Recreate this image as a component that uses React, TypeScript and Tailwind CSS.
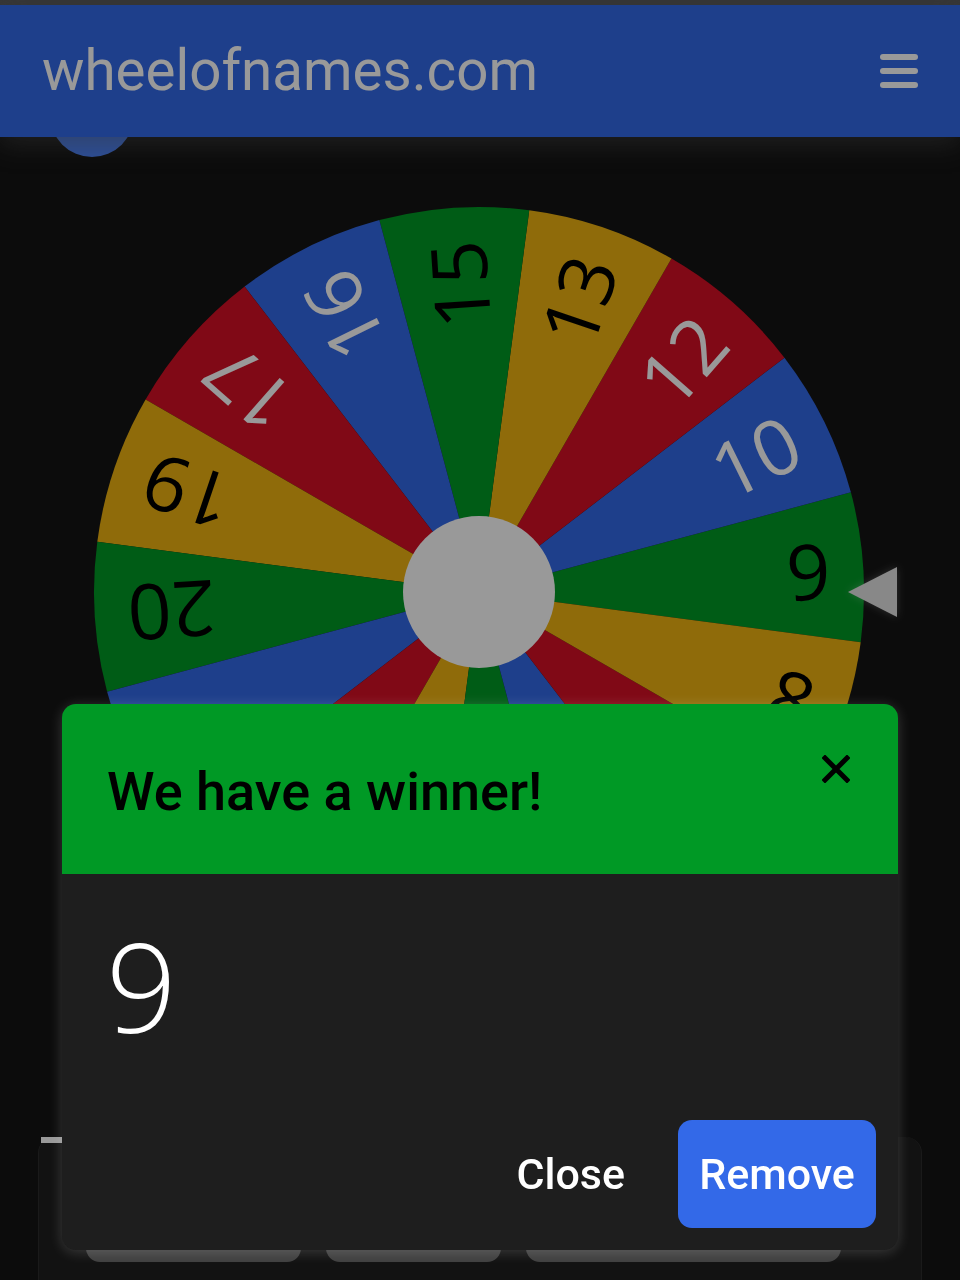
import { useState } from "react";

const colors = ["#009925", "#3369e8", "#d50f25", "#eeb211"];
const labels = ["9", "10", "12", "13", "15", "16", "17", "19", "20", "1", "2", "3", "4", "6", "7", "8"];

const cx = 479;
const cy = 395;
const r = 385;

const pt = (deg: number, rad: number) => {
    const a = (deg * Math.PI) / 180;
    return `${(cx + Math.cos(a) * rad).toFixed(2)} ${(cy + Math.sin(a) * rad).toFixed(2)}`;
};

const Wheel = () => (
    <svg width="960" height="800" viewBox="0 0 960 800" className="mt-[40px] block">
        <defs>
            <filter id="ptrGlow" x="-50%" y="-50%" width="200%" height="200%">
                <feDropShadow dx="0" dy="0" stdDeviation="4" floodColor="#ffffff" floodOpacity="0.25" />
            </filter>
        </defs>
        {labels.map((label, k) => {
            const c = -3.75 - 22.5 * k;
            const fill = colors[k % 4];
            const dark = k % 4 === 0 || k % 4 === 3;
            return (
                <g key={k}>
                    <path d={`M ${cx} ${cy} L ${pt(c - 11.25, r)} A ${r} ${r} 0 0 1 ${pt(c + 11.25, r)} Z`} fill={fill} />
                    <text
                        x={cx + 352}
                        y={cy}
                        transform={`rotate(${c} ${cx} ${cy})`}
                        textAnchor="end"
                        dominantBaseline="central"
                        fontSize="77"
                        fontFamily="'Open Sans', sans-serif"
                        fill={dark ? "#000000" : "#ffffff"}
                    >
                        {label}
                    </text>
                </g>
            );
        })}
        <circle cx={cx} cy={cy} r="76" fill="#ffffff" />
        <polygon points={`848,${cy} 897,${cy - 25} 897,${cy + 25}`} fill="#e3e3e3" filter="url(#ptrGlow)" />
    </svg>
);

export default function App() {
    const [open, setOpen] = useState(true);

    return (
        <div className="min-h-screen bg-[#141414] font-['Roboto',sans-serif] overflow-hidden">
            <div className="h-[5px] bg-[#5a5a5a]" />

            {/* Top bar */}
            <header className="relative z-10 h-[132px] bg-[#3369e8] flex items-center justify-between pl-[42px] pr-[42px] shadow-[0_8px_24px_rgba(90,90,90,0.45)]">
                <span className="text-[56.5px] leading-none text-white">wheelofnames.com</span>
                <div className="flex flex-col gap-[8px]">
                    <div className="w-[38px] h-[6px] rounded-full bg-white" />
                    <div className="w-[38px] h-[6px] rounded-full bg-white" />
                    <div className="w-[38px] h-[6px] rounded-full bg-white" />
                </div>
            </header>

            <div className="ml-[50px] -mt-[64px] w-[84px] h-[84px] rounded-full bg-[#4a82fc]" />

            <Wheel />

            {/* Entries card behind the dialog */}
            <div className="mt-[140px] mx-[38px] min-h-[200px] rounded-t-[16px] bg-[#1e1e1e] border-x border-[#2c2c2c]">
                <div className="ml-[2px] w-[21px] h-[6px] bg-white" />
                <div className="mt-[59px] pl-[47px] flex gap-[25px]">
                    <div className="w-[215px] h-[60px] rounded-[14px] bg-[#6a6a6a]" />
                    <div className="w-[175px] h-[60px] rounded-[14px] bg-[#6a6a6a]" />
                    <div className="w-[315px] h-[60px] rounded-[14px] bg-[#6a6a6a]" />
                </div>
            </div>

            {open && (
                <>
                    <div className="fixed inset-0 z-20 bg-black/40" />
                    <div className="fixed z-30 left-[62px] top-[704px] w-[836px] h-[546px] rounded-[14px] overflow-hidden bg-[#1e1e1e] flex flex-col shadow-[0_2px_14px_rgba(255,255,255,0.18)]">
                        <div className="h-[170px] shrink-0 bg-[#009925] flex items-start justify-between pl-[45px] pr-[48px]">
                            <h2 className="mt-[56px] text-[54px] leading-[64px] font-medium text-black">We have a winner!</h2>
                            <button className="mt-[51px]" onClick={() => setOpen(false)}>
                                <svg width="28" height="28" viewBox="0 0 28 28">
                                    <path d="M3 3 L25 25 M25 3 L3 25" stroke="#000" strokeWidth="5" strokeLinecap="square" />
                                </svg>
                            </button>
                        </div>
                        <div className="flex-1 flex flex-col justify-between pl-[44px] pr-[22px] pb-[22px]">
                            <div className="mt-[39px] text-[124px] leading-[144px] font-light text-white font-['Open_Sans',sans-serif]">9</div>
                            <div className="flex justify-end items-center gap-[33px]">
                                <button className="h-[108px] px-[20px] text-[43px] font-medium text-white">Close</button>
                                <button className="w-[198px] h-[108px] rounded-[14px] bg-[#3369e8] text-[43px] font-medium text-white">Remove</button>
                            </div>
                        </div>
                    </div>
                </>
            )}
        </div>
    );
}
